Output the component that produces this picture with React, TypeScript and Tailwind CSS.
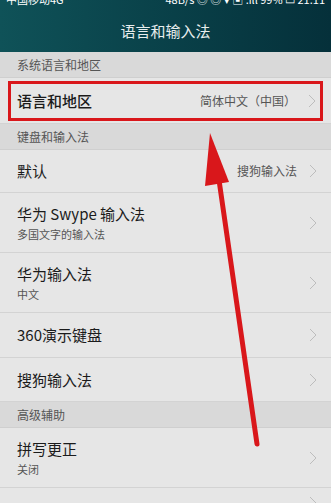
import React from "react";

const font = { fontFamily: '"Noto Sans CJK SC", "Noto Sans", sans-serif' };

function Chevron() {
  return (
    <svg width="8" height="14" viewBox="0 0 8 14" className="shrink-0">
      <path d="M1 1 L7 7 L1 13" fill="none" stroke="#bdbdbd" strokeWidth="1" />
    </svg>
  );
}

function Section({ title }: { title: string }) {
  return (
    <div className="h-[26px] flex items-center pl-[17px] bg-[#d9d9d9] border-b border-[#cfcfcf] text-[12px] text-[#555]">
      {title}
    </div>
  );
}

interface RowProps {
  title: string;
  sub?: string;
  value?: string;
  h: string;
}

function Row({ title, sub, value, h }: RowProps) {
  return (
    <div className={`${h} flex items-center pl-[17px] pr-[14px] bg-[#e6e6e6] border-b border-[#d3d3d3]`}>
      <div className="flex-1 flex flex-col">
        <span className="text-[15px] leading-[20px] text-[#1b1b1b]">{title}</span>
        {sub && <span className="text-[11px] leading-[16px] text-[#555] mt-[2px]">{sub}</span>}
      </div>
      {value && <span className="text-[12px] text-[#555] mr-[12px]">{value}</span>}
      <Chevron />
    </div>
  );
}

export default function App() {
  return (
    <div className="relative w-[331px] h-[503px] overflow-hidden bg-[#e6e6e6]" style={font}>
      {/* header */}
      <div className="h-[52px] bg-gradient-to-r from-[#0f5258] to-[#05303a] relative">
        <div className="h-[6px] overflow-hidden flex justify-between px-[6px] text-white text-[11px] leading-[11px]">
          <span className="-mt-[6px]">中国移动4G</span>
          <span className="-mt-[6px]">48B/s ◎ ◎ ▾ ▣ .ıll 99% ▭ 21:11</span>
        </div>
        <div className="text-center text-[15px] text-[#e8eeee] mt-[14px]">语言和输入法</div>
      </div>

      <Section title="系统语言和地区" />
      <div className="h-[46px] bg-[#e6e6e6] border-b border-[#d3d3d3] px-[8px] pt-[3px]">
        <div className="h-[40px] border-[3px] border-[#d9171b] flex items-center pl-[6px] pr-[4px]">
          <span className="flex-1 text-[15px] text-[#1b1b1b] font-medium">语言和地区</span>
          <span className="text-[12px] text-[#555] mr-[12px]">简体中文（中国）</span>
          <Chevron />
        </div>
      </div>
      <Section title="键盘和输入法" />
      <Row title="默认" value="搜狗输入法" h="h-[43px]" />
      <Row title="华为 Swype 输入法" sub="多国文字的输入法" h="h-[60px]" />
      <Row title="华为输入法" sub="中文" h="h-[60px]" />
      <Row title="360演示键盘" h="h-[45px]" />
      <Row title="搜狗输入法" h="h-[44px]" />
      <Section title="高级辅助" />
      <Row title="拼写更正" sub="关闭" h="h-[60px]" />
      <Row title="" h="h-[30px]" />

      {/* red arrow overlay */}
      <svg className="absolute left-0 top-0 pointer-events-none" width="331" height="503" viewBox="0 0 331 503">
        <line x1="219" y1="180" x2="257" y2="444" stroke="#d9171b" strokeWidth="5" strokeLinecap="round" />
        <polygon points="210,133 205,186 229,182" fill="#d9171b" />
      </svg>
    </div>
  );
}
